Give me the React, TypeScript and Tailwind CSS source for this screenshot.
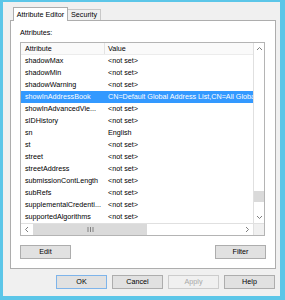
import React from "react";

const rows: [string, string][] = [
  ["shadowMax", "<not set>"],
  ["shadowMin", "<not set>"],
  ["shadowWarning", "<not set>"],
  ["showInAddressBook", "CN=Default Global Address List,CN=All Global Address Lists"],
  ["showInAdvancedVie...", "<not set>"],
  ["sIDHistory", "<not set>"],
  ["sn", "English"],
  ["st", "<not set>"],
  ["street", "<not set>"],
  ["streetAddress", "<not set>"],
  ["submissionContLength", "<not set>"],
  ["subRefs", "<not set>"],
  ["supplementalCredenti...", "<not set>"],
  ["supportedAlgorithms", "<not set>"],
];

const Chevron = ({ dir }: { dir: "up" | "down" | "left" | "right" }) => {
  const pts: Record<string, string> = {
    up: "1,4 3.5,1.5 6,4",
    down: "1,2 3.5,4.5 6,2",
    left: "4,1 1.5,3.5 4,6",
    right: "2,1 4.5,3.5 2,6",
  };
  return (
    <svg width="7" height="7" viewBox="0 0 7 7">
      <polyline points={pts[dir]} fill="none" stroke="#707070" strokeWidth="0.9" />
    </svg>
  );
};

function Btn({ label, w = "w-[51px]", variant = "normal" }: { label: string; w?: string; variant?: "normal" | "default" | "disabled" }) {
  const cls =
    variant === "default"
      ? "border-[#7eb4ea] bg-[#e1e1e1] text-black"
      : variant === "disabled"
      ? "border-[#cccccc] bg-[#f0f0f0] text-[#a8a8a8]"
      : "border-[#adadad] bg-[#e1e1e1] text-black";
  return (
    <div className={`${w} h-[14px] border flex items-center justify-center ${cls}`}>
      <span className="leading-[12px]">{label}</span>
    </div>
  );
}

export default function App() {
  return (
    <div
      className="w-[285px] h-[300px] bg-[#5cc6e8] pt-[2px] pl-[3px] pr-[5px] pb-[4px] text-[7.2px] text-black"
      style={{ fontFamily: '"Liberation Sans", Arial, sans-serif' }}
    >
      <div className="w-[277px] h-[294px] bg-[#f0f0f0] flex flex-col">
        {/* tabs */}
        <div className="h-[13px] mt-[5px] ml-[10px] flex items-end">
          <div className="relative z-10 mb-[-1px] h-[14px] w-[55px] bg-white border-t border-l border-r border-[#adadad] flex items-center justify-center">
            <span className="leading-[12px]">Attribute Editor</span>
          </div>
          <div className="h-[11px] w-[33px] bg-[#f0f0f0] border-t border-r border-[#c8c8c8] flex items-center justify-center">
            <span className="leading-[10px]">Security</span>
          </div>
        </div>
        {/* panel */}
        <div className="ml-[7px] mr-[4px] h-[249px] bg-white border border-[#adadad] pl-[9px] flex flex-col">
          <div className="mt-[7px] h-[10px] leading-[10px]">Attributes:</div>
          <div className="mt-[4px] w-[245px] h-[194px] border border-[#b4b4b4] flex flex-col">
            <div className="flex h-[180px]">
              <div className="w-[232px] flex flex-col overflow-hidden">
                <div className="h-[12px] flex bg-[#fafafa] border-b border-[#ececec]">
                  <div className="w-[84px] pl-[4px] border-r border-[#e3e3e3] leading-[12px]">Attribute</div>
                  <div className="pl-[3px] leading-[12px]">Value</div>
                </div>
                {rows.map(([a, v], i) => {
                  const sel = i === 3;
                  return (
                    <div
                      key={a}
                      className={`h-[12px] flex whitespace-nowrap ${sel ? "bg-[#3399ff] text-white" : ""}`}
                    >
                      <div className="w-[84px] pl-[4px] leading-[12px] overflow-hidden">{a}</div>
                      <div className="pl-[3px] leading-[12px] overflow-hidden flex-1">{v}</div>
                    </div>
                  );
                })}
              </div>
              {/* vertical scrollbar */}
              <div className="w-[11px] border-l border-[#e0e0e0] bg-white flex flex-col">
                <div className="h-[12px] flex items-center justify-center">
                  <Chevron dir="up" />
                </div>
                <div className="h-[136px]" />
                <div className="h-[11px] bg-[#dadada]" />
                <div className="flex-1" />
                <div className="h-[12px] flex items-center justify-center">
                  <Chevron dir="down" />
                </div>
              </div>
            </div>
            {/* horizontal scrollbar */}
            <div className="flex h-[12px] border-t border-[#e0e0e0]">
              <div className="w-[232px] flex bg-white">
                <div className="w-[12px] flex items-center justify-center">
                  <Chevron dir="left" />
                </div>
                <div className="w-[114px] bg-[#dadada] flex items-center justify-center">
                  <svg width="7" height="5" viewBox="0 0 7 5">
                    <line x1="1" y1="0" x2="1" y2="5" stroke="#808080" strokeWidth="1" />
                    <line x1="3.5" y1="0" x2="3.5" y2="5" stroke="#808080" strokeWidth="1" />
                    <line x1="6" y1="0" x2="6" y2="5" stroke="#808080" strokeWidth="1" />
                  </svg>
                </div>
                <div className="flex-1" />
                <div className="w-[12px] flex items-center justify-center">
                  <Chevron dir="right" />
                </div>
              </div>
              <div className="w-[11px] bg-[#f0f0f0] border-l border-[#e0e0e0]" />
            </div>
          </div>
          <div className="mt-[9px] w-[246px] flex justify-between">
            <Btn label="Edit" />
            <Btn label="Filter" />
          </div>
        </div>
        {/* bottom buttons */}
        <div className="mt-[6px] pr-[5px] flex justify-end gap-[5px]">
          <Btn label="OK" variant="default" />
          <Btn label="Cancel" />
          <Btn label="Apply" variant="disabled" />
          <Btn label="Help" />
        </div>
      </div>
    </div>
  );
}
